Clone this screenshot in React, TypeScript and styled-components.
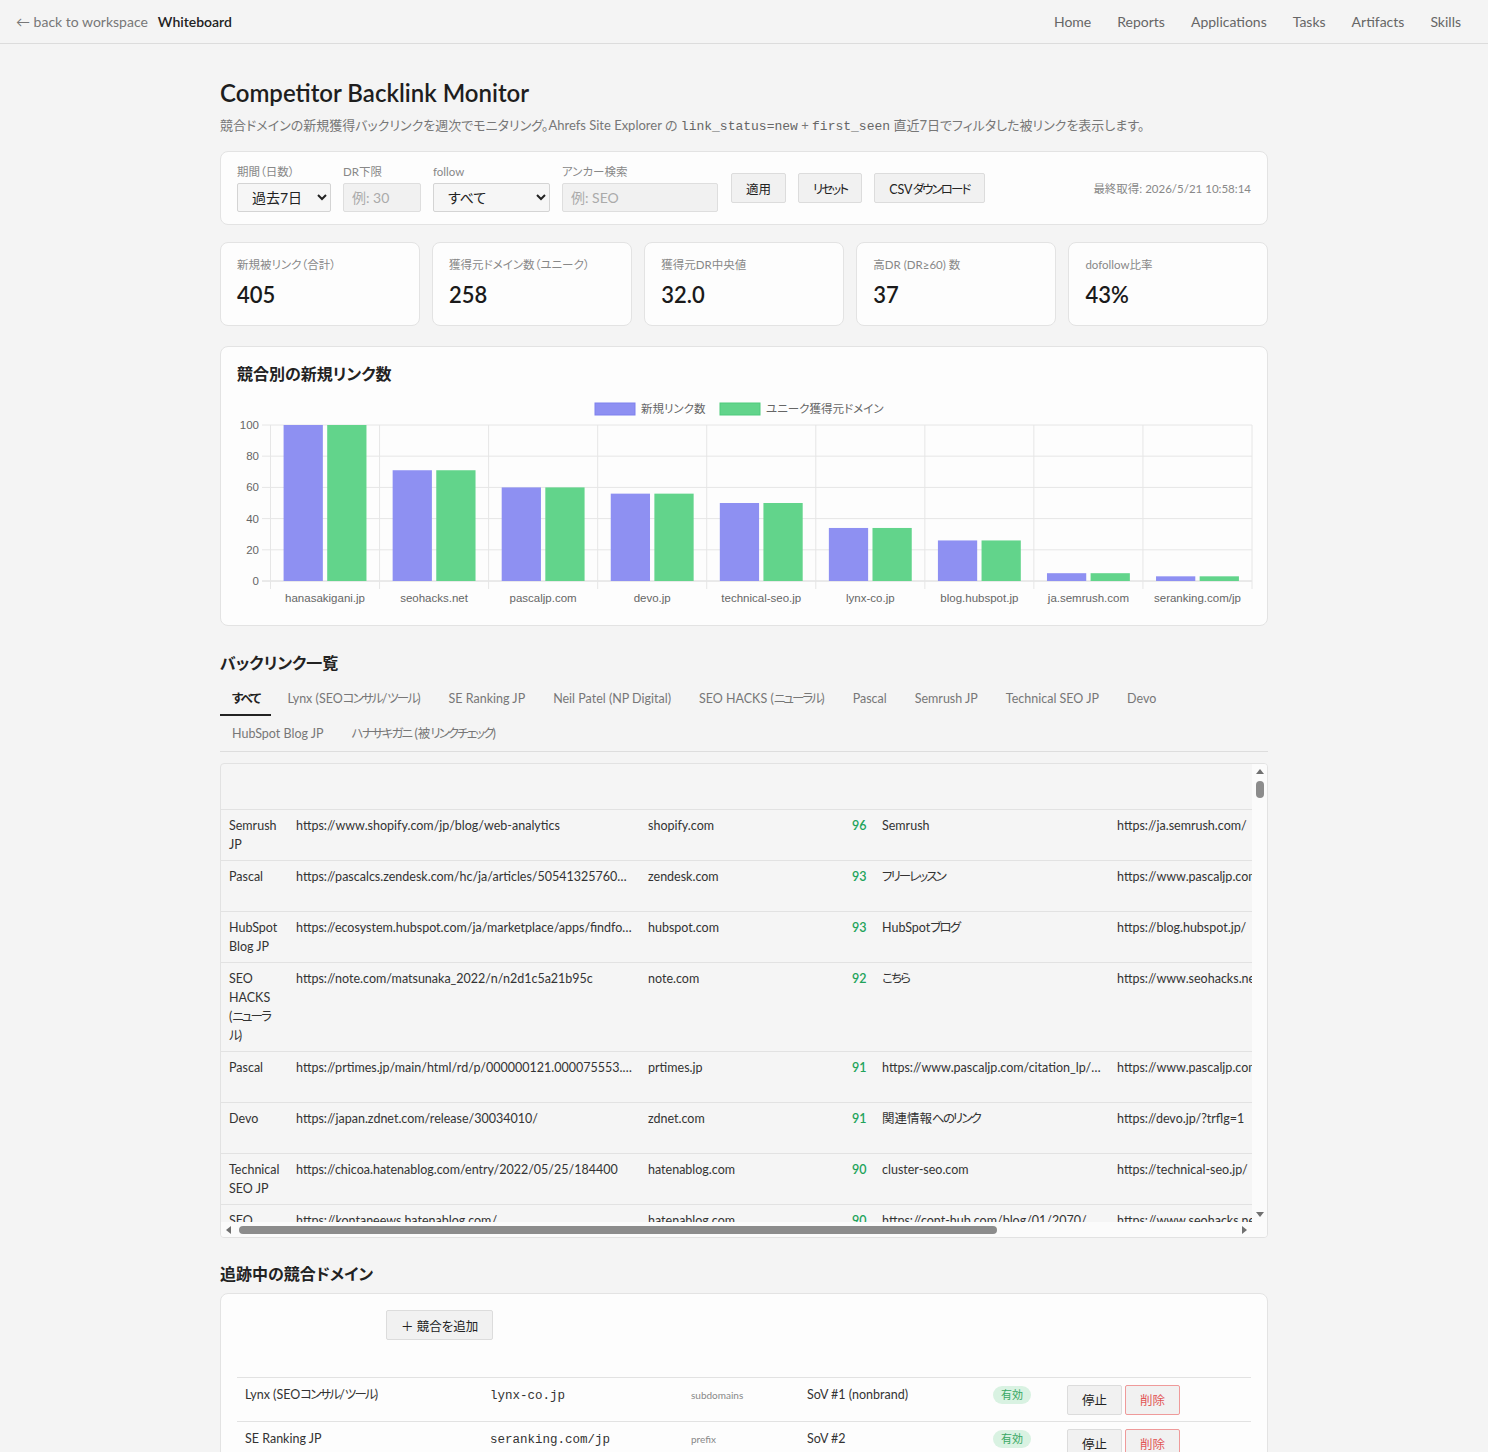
import React from 'react'
import styled, { createGlobalStyle, css } from 'styled-components'

const GlobalStyle = createGlobalStyle`
  html, body {
    margin: 0;
    padding: 0;
    background: #f4f4f4;
  }
  body {
    font-family: "Segoe UI", Lato, "Noto Sans CJK JP", sans-serif;
    font-feature-settings: "palt";
    color: #222;
  }
  * {
    box-sizing: border-box;
  }
`

// kana in the controls and tables render narrower in the original UI font
const Kana = styled.span`
  letter-spacing: -0.15em;
`

function narrow(text: string) {
  return text
    .split(/([\u3040-\u30ff]+)/)
    .map((part, i) => (i % 2 ? <Kana key={i}>{part}</Kana> : part))
}

const TopBar = styled.header`
  height: 44px;
  display: flex;
  align-items: center;
  justify-content: space-between;
  padding: 0 14px 0 16px;
  border-bottom: 1px solid #dcdcdc;
  font-size: 14px;
`

const BackLink = styled.a`
  color: #777;
  text-decoration: none;
`

const Brand = styled.span`
  font-weight: 600;
  color: #222;
  margin-left: 10px;
`

const NavLinks = styled.nav`
  display: flex;
`

const NavLink = styled.a`
  color: #666;
  text-decoration: none;
  padding: 0 13px;
`

const Main = styled.main`
  width: 1048px;
  margin: 0 auto;
  padding: 33px 0 40px;
`

const Title = styled.h1`
  margin: 0;
  font-size: 24px;
  line-height: 32px;
  font-weight: 600;
  color: #1e1e1e;
`

const Subtitle = styled.p`
  margin: 6px 0 0;
  font-size: 13px;
  line-height: 20px;
  color: #777;

  code {
    font-family: "Liberation Mono", "DejaVu Sans Mono", monospace;
    font-size: 13px;
    color: #666;
  }
`

const Card = styled.section`
  background: #fdfdfd;
  border: 1px solid #e3e3e3;
  border-radius: 8px;
`

const FilterCard = styled(Card)`
  margin-top: 14px;
  padding: 12px 16px;
  display: flex;
  align-items: center;
  gap: 12px;
`

const Field = styled.label<{ w: number }>`
  display: flex;
  flex-direction: column;
  gap: 3px;
  width: ${({ w }) => w}px;
`

const FieldLabel = styled.span`
  font-size: 11.5px;
  line-height: 16px;
  color: #888;
`

const controlBase = css`
  height: 29px;
  border: 1px solid #d4d4d4;
  border-radius: 2px;
  font-family: inherit;
  font-feature-settings: "palt";
  font-size: 14px;
  padding: 0 8px;
  color: #222;
`

const Select = styled.select`
  ${controlBase}
  background: #f6f6f6;
  padding-left: 10px;
`

const Input = styled.input`
  ${controlBase}
  background: #f1f1f1;
  border-color: #dedede;
  width: 100%;
  &::placeholder {
    color: #aaa;
  }
`

const Button = styled.button<{ danger?: boolean }>`
  height: 30px;
  padding: 0 14px;
  background: #f1f1f1;
  border: 1px solid ${({ danger }) => (danger ? '#ef9a9a' : '#dcdcdc')};
  border-radius: 2px;
  font-family: inherit;
  font-feature-settings: "palt";
  font-size: 12.5px;
  color: ${({ danger }) => (danger ? '#e25555' : '#222')};
  cursor: pointer;
  white-space: nowrap;
`

const ButtonGroup = styled.div`
  display: flex;
  gap: 12px;
  margin-left: 1px;
`

const FetchedAt = styled.span`
  margin-left: auto;
  font-size: 11.5px;
  color: #888;
`

const StatsGrid = styled.div`
  margin-top: 17px;
  display: grid;
  grid-template-columns: repeat(5, 1fr);
  gap: 12.5px;
`

const StatCard = styled(Card)`
  padding: 14px 16px 16px;
`

const StatLabel = styled.div`
  font-size: 11.5px;
  line-height: 16px;
  color: #888;
`

const StatValue = styled.div`
  margin-top: 8px;
  font-size: 22px;
  line-height: 28px;
  font-weight: 600;
  color: #1a1a1a;
`

const ChartCard = styled(Card)`
  margin-top: 20px;
  padding: 16px;
`

const CardTitle = styled.h3`
  margin: 0;
  font-size: 16px;
  line-height: 22px;
  font-weight: 700;
  color: #222;
`

const ChartSvg = styled.svg`
  display: block;
  margin-top: 10px;
  font-family: "Liberation Sans", Arial, "Noto Sans CJK JP", sans-serif;
`

const SectionTitle = styled.h2<{ top: number }>`
  margin: ${({ top }) => top}px 0 0;
  font-size: 16px;
  line-height: 22px;
  font-weight: 700;
  color: #222;
`

const Tabs = styled.div`
  margin-top: 7px;
  display: flex;
  flex-wrap: wrap;
  column-gap: 4px;
  border-bottom: 1px solid #dddddd;
`

const Tab = styled.button<{ active?: boolean }>`
  padding: 8px 12px 6px;
  line-height: 19px;
  font-family: inherit;
  font-feature-settings: "palt";
  font-size: 12.5px;
  background: none;
  border: none;
  border-bottom: 2px solid ${({ active }) => (active ? '#222' : 'transparent')};
  color: ${({ active }) => (active ? '#222' : '#777')};
  font-weight: ${({ active }) => (active ? 600 : 400)};
  cursor: pointer;
`

const TableFrame = styled.div`
  margin-top: 11px;
  height: 475px;
  display: grid;
  grid-template-columns: 1fr 15px;
  grid-template-rows: 1fr 15px;
  border: 1px solid #e2e2e2;
  border-radius: 4px;
  background: #f5f5f5;
  overflow: hidden;
`

const TableViewport = styled.div`
  overflow: hidden;
  min-width: 0;
`

const Rail = styled.div<{ vertical?: boolean }>`
  display: flex;
  flex-direction: ${({ vertical }) => (vertical ? 'column' : 'row')};
  align-items: center;
  background: #fbfbfb;
`

const RailCorner = styled.div`
  background: #fbfbfb;
`

const ArrowBox = styled.span`
  flex: none;
  width: 15px;
  height: 15px;
  display: flex;
  align-items: center;
  justify-content: center;
`

const Arrow = styled.span<{ dir: 'up' | 'down' | 'left' | 'right' }>`
  width: 0;
  height: 0;
  ${({ dir }) =>
    dir === 'up' || dir === 'down'
      ? css`
          border-left: 4.5px solid transparent;
          border-right: 4.5px solid transparent;
          border-${dir === 'up' ? 'bottom' : 'top'}: 5px solid #707070;
        `
      : css`
          border-top: 4.5px solid transparent;
          border-bottom: 4.5px solid transparent;
          border-${dir === 'left' ? 'right' : 'left'}: 5px solid #707070;
        `}
`

const Thumb = styled.span<{ vertical?: boolean; size: number }>`
  flex: none;
  background: #8c8c8c;
  border-radius: 4px;
  ${({ vertical, size }) =>
    vertical
      ? css`
          width: 8px;
          height: ${size}px;
          margin-top: 2px;
        `
      : css`
          height: 8px;
          width: ${size}px;
          margin-left: 3px;
        `}
`

const RailSpacer = styled.span`
  flex: 1;
`

const LinkTable = styled.table`
  width: 1386px;
  table-layout: fixed;
  border-collapse: collapse;
  font-size: 12.5px;
  color: #333;
`

const HeadCell = styled.th`
  height: 45px;
  border-bottom: 1px solid #e2e2e2;
`

const Row = styled.tr`
  height: 51px;
`

const Cell = styled.td<{ clip?: boolean; align?: string }>`
  padding: 6px 8px;
  line-height: 19px;
  vertical-align: top;
  border-bottom: 1px solid #e2e2e2;
  text-align: ${({ align }) => align || 'left'};
  ${({ clip }) =>
    clip &&
    css`
      white-space: nowrap;
      overflow: hidden;
      text-overflow: ellipsis;
    `}
`

const DR = styled.span`
  color: #22a35a;
  font-weight: 600;
`

const DomainCard = styled(Card)`
  margin-top: 8px;
  padding: 16px;
`

const AddRow = styled.div`
  display: flex;
  padding-left: 149px;
  margin-bottom: 10px;
`

const DomainTable = styled.table`
  width: 100%;
  table-layout: fixed;
  border-collapse: collapse;
  font-size: 12.5px;
  color: #333;
`

const DomainHead = styled.th`
  height: 27px;
  border-bottom: 1px solid #e2e2e2;
`

const DomainCell = styled.td`
  height: 44px;
  padding: 7px 8px 0;
  line-height: 19px;
  border-bottom: 1px solid #e2e2e2;
  vertical-align: top;
`

const Mono = styled.span`
  font-family: "Liberation Mono", "DejaVu Sans Mono", monospace;
  font-size: 12.5px;
`

const Scope = styled.span`
  font-size: 10px;
  color: #888;
`

const Badge = styled.span`
  display: inline-block;
  padding: 1px 8px;
  border-radius: 9px;
  background: #d9f2e2;
  color: #3aa864;
  font-size: 11px;
  line-height: 16px;
`

const Actions = styled.div`
  display: flex;
  gap: 3px;
`

const SmallButton = styled(Button)`
  width: 55px;
  padding: 0;
`

const chartData = [
  { name: 'hanasakigani.jp', v: 100 },
  { name: 'seohacks.net', v: 71 },
  { name: 'pascaljp.com', v: 60 },
  { name: 'devo.jp', v: 56 },
  { name: 'technical-seo.jp', v: 50 },
  { name: 'lynx-co.jp', v: 34 },
  { name: 'blog.hubspot.jp', v: 26 },
  { name: 'ja.semrush.com', v: 5 },
  { name: 'seranking.com/jp', v: 3 },
]

function BarChart() {
  const W = 1016
  const H = 214
  const left = 33.5
  const right = 1015
  const top = 30
  const bottom = 186
  const cw = (right - left) / chartData.length
  const slot = (cw * 0.8) / 2
  const bw = slot * 0.9
  const y = (v: number) => bottom - ((bottom - top) * v) / 100
  return (
    <ChartSvg width={W} height={H} viewBox={`0 0 ${W} ${H}`}>
      <rect x={358} y={8} width={40} height={12} fill="#8e90f2" stroke="#7f81ee" />
      <text x={404} y={18} fontSize={11.5} fill="#666">
        新規リンク数
      </text>
      <rect x={483} y={8} width={40} height={12} fill="#62d48b" stroke="#4fcb7c" />
      <text x={529} y={18} fontSize={11.5} fill="#666">
        ユニーク獲得元ドメイン
      </text>
      {[0, 20, 40, 60, 80, 100].map((t) => (
        <g key={t}>
          <line x1={25} x2={right} y1={y(t)} y2={y(t)} stroke={t === 0 ? '#d6d6d6' : '#e6e6e6'} />
          <text x={22} y={y(t) + 4} fontSize={11.5} fill="#666" textAnchor="end">
            {t}
          </text>
        </g>
      ))}
      {chartData.map((_, i) => (
        <line key={i} x1={left + i * cw} x2={left + i * cw} y1={top} y2={bottom + 8} stroke="#e6e6e6" />
      ))}
      <line x1={right} x2={right} y1={top} y2={bottom + 8} stroke="#e6e6e6" />
      {chartData.map((d, i) => {
        const x0 = left + i * cw + cw * 0.1 + (slot - bw) / 2
        return (
          <g key={d.name}>
            <rect x={x0} y={y(d.v)} width={bw} height={bottom - y(d.v)} fill="#8e90f2" />
            <rect x={x0 + slot} y={y(d.v)} width={bw} height={bottom - y(d.v)} fill="#62d48b" />
            <text x={left + i * cw + cw / 2} y={207} fontSize={11.5} fill="#666" textAnchor="middle">
              {d.name}
            </text>
          </g>
        )
      })}
    </ChartSvg>
  )
}

type Link = { comp: string; url: string; domain: string; dr: number; anchor: string; target: string; seen: string; rel: string }

const links: Link[] = [
  { comp: 'Semrush JP', url: 'https://www.shopify.com/jp/blog/web-analytics', domain: 'shopify.com', dr: 96, anchor: 'Semrush', target: 'https://ja.semrush.com/', seen: '2026-05-18', rel: 'dofollow' },
  { comp: 'Pascal', url: 'https://pascalcs.zendesk.com/hc/ja/articles/50541325760341', domain: 'zendesk.com', dr: 93, anchor: 'フリーレッスン', target: 'https://www.pascaljp.com/lesson/', seen: '2026-05-17', rel: 'nofollow' },
  { comp: 'HubSpot Blog JP', url: 'https://ecosystem.hubspot.com/ja/marketplace/apps/findforms', domain: 'hubspot.com', dr: 93, anchor: 'HubSpotブログ', target: 'https://blog.hubspot.jp/', seen: '2026-05-19', rel: 'dofollow' },
  { comp: 'SEO HACKS (ニューラル)', url: 'https://note.com/matsunaka_2022/n/n2d1c5a21b95c', domain: 'note.com', dr: 92, anchor: 'こちら', target: 'https://www.seohacks.net/', seen: '2026-05-16', rel: 'nofollow' },
  { comp: 'Pascal', url: 'https://prtimes.jp/main/html/rd/p/000000121.000075553.html', domain: 'prtimes.jp', dr: 91, anchor: 'https://www.pascaljp.com/citation_lp/index.html', target: 'https://www.pascaljp.com/citation_lp/', seen: '2026-05-15', rel: 'nofollow' },
  { comp: 'Devo', url: 'https://japan.zdnet.com/release/30034010/', domain: 'zdnet.com', dr: 91, anchor: '関連情報へのリンク', target: 'https://devo.jp/?trflg=1', seen: '2026-05-18', rel: 'dofollow' },
  { comp: 'Technical SEO JP', url: 'https://chicoa.hatenablog.com/entry/2022/05/25/184400', domain: 'hatenablog.com', dr: 90, anchor: 'cluster-seo.com', target: 'https://technical-seo.jp/', seen: '2026-05-20', rel: 'dofollow' },
  { comp: 'SEO HACKS (ニューラル)', url: 'https://kontaneews.hatenablog.com/', domain: 'hatenablog.com', dr: 90, anchor: 'https://cont-hub.com/blog/01/2070/', target: 'https://www.seohacks.net/blog/', seen: '2026-05-19', rel: 'dofollow' },
  { comp: 'Lynx (SEOコンサル/ツール)', url: 'https://ameblo.jp/seo-study/entry-12850031.html', domain: 'ameblo.jp', dr: 89, anchor: 'Lynx', target: 'https://lynx-co.jp/', seen: '2026-05-17', rel: 'nofollow' },
]

const competitors = [
  { name: 'Lynx (SEOコンサル/ツール)', domain: 'lynx-co.jp', scope: 'subdomains', label: 'SoV #1 (nonbrand)' },
  { name: 'SE Ranking JP', domain: 'seranking.com/jp', scope: 'prefix', label: 'SoV #2' },
  { name: 'Neil Patel (NP Digital)', domain: 'neilpatel.com/jp', scope: 'prefix', label: 'SoV #3' },
]

const tabs = [
  'すべて',
  'Lynx (SEOコンサル/ツール)',
  'SE Ranking JP',
  'Neil Patel (NP Digital)',
  'SEO HACKS (ニューラル)',
  'Pascal',
  'Semrush JP',
  'Technical SEO JP',
  'Devo',
  'HubSpot Blog JP',
  'ハナサキガニ (被リンクチェック)',
]

const stats = [
  { label: '新規被リンク（合計）', value: '405' },
  { label: '獲得元ドメイン数（ユニーク）', value: '258' },
  { label: '獲得元DR中央値', value: '32.0' },
  { label: '高DR (DR≥60) 数', value: '37' },
  { label: 'dofollow比率', value: '43%' },
]

export default function App() {
  return (
    <>
      <GlobalStyle />
      <TopBar>
        <div>
          <BackLink href="#">← back to workspace</BackLink>
          <Brand>Whiteboard</Brand>
        </div>
        <NavLinks>
          {['Home', 'Reports', 'Applications', 'Tasks', 'Artifacts', 'Skills'].map((n) => (
            <NavLink key={n} href="#">
              {n}
            </NavLink>
          ))}
        </NavLinks>
      </TopBar>
      <Main>
        <Title>Competitor Backlink Monitor</Title>
        <Subtitle>
          競合ドメインの新規獲得バックリンクを週次でモニタリング。Ahrefs Site Explorer の <code>link_status=new</code> +{' '}
          <code>first_seen</code> 直近7日でフィルタした被リンクを表示します。
        </Subtitle>

        <FilterCard>
          <Field w={94}>
            <FieldLabel>期間（日数）</FieldLabel>
            <Select defaultValue="7">
              <option value="7">過去7日</option>
              <option value="30">過去30日</option>
            </Select>
          </Field>
          <Field w={78}>
            <FieldLabel>DR下限</FieldLabel>
            <Input placeholder="例: 30" />
          </Field>
          <Field w={117}>
            <FieldLabel>follow</FieldLabel>
            <Select defaultValue="all">
              <option value="all">すべて</option>
              <option value="dofollow">dofollow</option>
            </Select>
          </Field>
          <Field w={156}>
            <FieldLabel>アンカー検索</FieldLabel>
            <Input placeholder="例: SEO" />
          </Field>
          <ButtonGroup>
            <Button>適用</Button>
            <Button>{narrow('リセット')}</Button>
            <Button>CSV{narrow('ダウンロード')}</Button>
          </ButtonGroup>
          <FetchedAt>最終取得: 2026/5/21 10:58:14</FetchedAt>
        </FilterCard>

        <StatsGrid>
          {stats.map((s) => (
            <StatCard key={s.label}>
              <StatLabel>{s.label}</StatLabel>
              <StatValue>{s.value}</StatValue>
            </StatCard>
          ))}
        </StatsGrid>

        <ChartCard>
          <CardTitle>競合別の新規リンク数</CardTitle>
          <BarChart />
        </ChartCard>

        <SectionTitle top={26}>バックリンク一覧</SectionTitle>
        <Tabs>
          {tabs.map((t, i) => (
            <Tab key={t} active={i === 0}>
              {narrow(t)}
            </Tab>
          ))}
        </Tabs>
        <TableFrame>
          <TableViewport>
            <LinkTable>
              <colgroup>
                <col style={{ width: 67 }} />
                <col style={{ width: 352 }} />
                <col style={{ width: 204 }} />
                <col style={{ width: 30 }} />
                <col style={{ width: 235 }} />
                <col style={{ width: 260 }} />
                <col style={{ width: 110 }} />
                <col style={{ width: 128 }} />
              </colgroup>
              <thead>
                <tr>
                  {Array.from({ length: 8 }, (_, i) => (
                    <HeadCell key={i} />
                  ))}
                </tr>
              </thead>
              <tbody>
                {links.map((l, i) => (
                  <Row key={i}>
                    <Cell>{narrow(l.comp)}</Cell>
                    <Cell clip>{l.url}</Cell>
                    <Cell clip>{l.domain}</Cell>
                    <Cell align="right">
                      <DR>{l.dr}</DR>
                    </Cell>
                    <Cell clip>{narrow(l.anchor)}</Cell>
                    <Cell clip>{l.target}</Cell>
                    <Cell>{l.seen}</Cell>
                    <Cell>{l.rel}</Cell>
                  </Row>
                ))}
              </tbody>
            </LinkTable>
          </TableViewport>
          <Rail vertical>
            <ArrowBox>
              <Arrow dir="up" />
            </ArrowBox>
            <Thumb vertical size={17} />
            <RailSpacer />
            <ArrowBox>
              <Arrow dir="down" />
            </ArrowBox>
          </Rail>
          <Rail>
            <ArrowBox>
              <Arrow dir="left" />
            </ArrowBox>
            <Thumb size={758} />
            <RailSpacer />
            <ArrowBox>
              <Arrow dir="right" />
            </ArrowBox>
          </Rail>
          <RailCorner />
        </TableFrame>

        <SectionTitle top={25}>追跡中の競合ドメイン</SectionTitle>
        <DomainCard>
          <AddRow>
            <Button>＋ 競合を追加</Button>
          </AddRow>
          <DomainTable>
            <colgroup>
              <col style={{ width: 245 }} />
              <col style={{ width: 201 }} />
              <col style={{ width: 116 }} />
              <col style={{ width: 186 }} />
              <col style={{ width: 74 }} />
              <col />
            </colgroup>
            <thead>
              <tr>
                {Array.from({ length: 6 }, (_, i) => (
                  <DomainHead key={i} />
                ))}
              </tr>
            </thead>
            <tbody>
              {competitors.map((c) => (
                <tr key={c.domain}>
                  <DomainCell>{narrow(c.name)}</DomainCell>
                  <DomainCell>
                    <Mono>{c.domain}</Mono>
                  </DomainCell>
                  <DomainCell>
                    <Scope>{c.scope}</Scope>
                  </DomainCell>
                  <DomainCell>{c.label}</DomainCell>
                  <DomainCell>
                    <Badge>有効</Badge>
                  </DomainCell>
                  <DomainCell>
                    <Actions>
                      <SmallButton>停止</SmallButton>
                      <SmallButton danger>削除</SmallButton>
                    </Actions>
                  </DomainCell>
                </tr>
              ))}
            </tbody>
          </DomainTable>
        </DomainCard>
      </Main>
    </>
  )
}
